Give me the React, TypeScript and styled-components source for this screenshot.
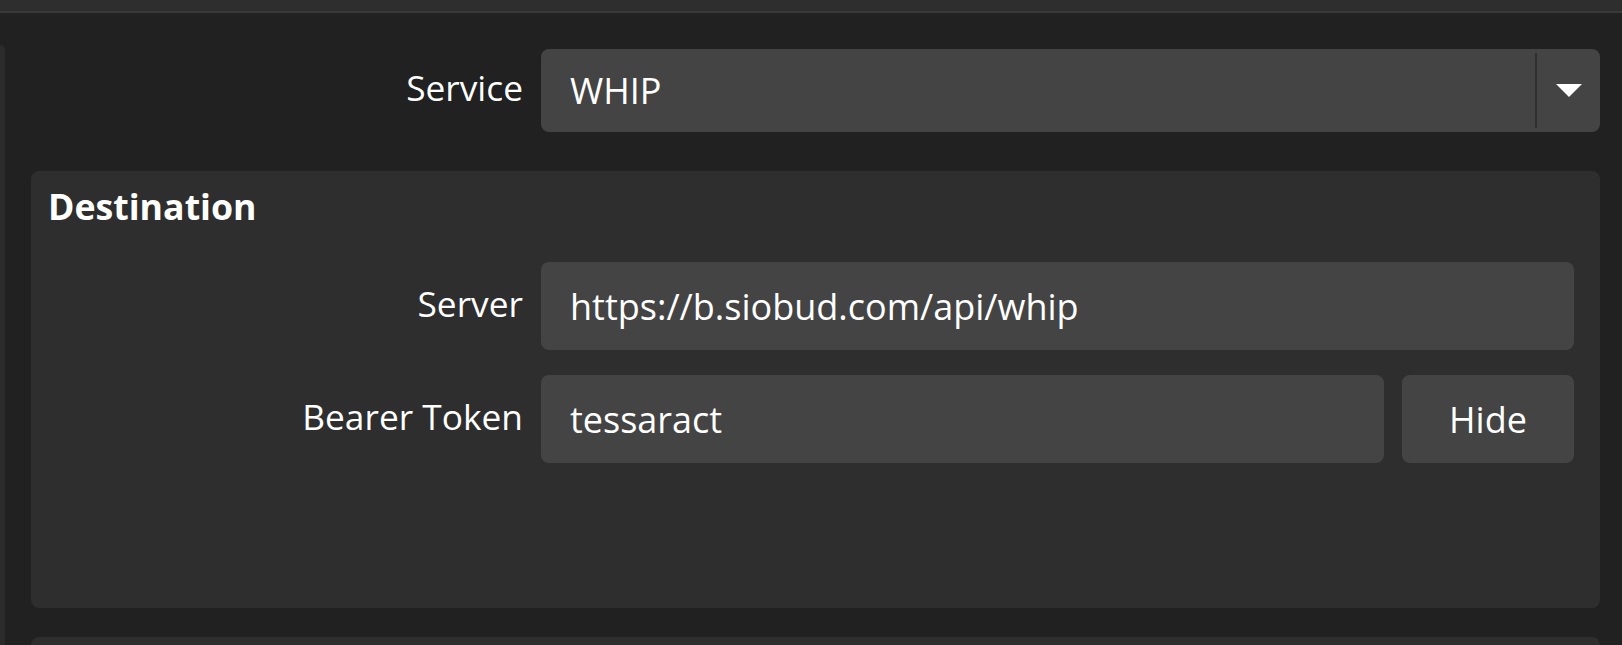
import React from "react";
import styled, { createGlobalStyle } from "styled-components";

const GlobalStyle = createGlobalStyle`
  html, body {
    margin: 0;
    padding: 0;
    background: #212121;
    overflow: hidden;
  }
  body {
    font-family: "Open Sans", "Noto Sans", sans-serif;
    color: #ffffff;
  }
  * { box-sizing: border-box; }
`;

const Window = styled.div`
  height: 645px;
  display: flex;
  flex-direction: column;
  background: #212121;
`;

const TitleBar = styled.div`
  height: 13px;
  flex-shrink: 0;
  background: #2e2e2e;
  border-bottom: 2px solid #393939;
`;

const Body = styled.div`
  flex: 1;
  display: flex;
  min-height: 0;
  overflow: hidden;
`;

const SidePanel = styled.div`
  width: 5px;
  flex-shrink: 0;
  margin-top: 32px;
  background: #2b2b2b;
  border-top-right-radius: 5px;
`;

const Content = styled.div`
  flex: 1;
  display: flex;
  flex-direction: column;
  padding: 36px 22px 0 26px;
  min-width: 0;
`;

const FormRow = styled.div<{ $label: number; $h: number }>`
  display: grid;
  grid-template-columns: ${(p) => p.$label}px 1fr;
  column-gap: 18px;
  height: ${(p) => p.$h}px;
  flex-shrink: 0;
`;

const Label = styled.div`
  align-self: center;
  text-align: right;
  font-size: 35.3px;
  line-height: 49px;
  padding-bottom: 6px;
  white-space: nowrap;
  color: #ffffff;
`;

const Combo = styled.div`
  display: flex;
  align-items: stretch;
  background: #444444;
  border-radius: 8px;
  overflow: hidden;
`;

const ComboText = styled.div`
  flex: 1;
  display: flex;
  align-items: center;
  padding-left: 29px;
  font-size: 36px;
  line-height: 49px;
`;

const ComboArrow = styled.div`
  width: 65px;
  margin: 4px 0;
  border-left: 2px solid #2f2f2f;
  display: flex;
  align-items: center;
  justify-content: center;
  padding-left: 1px;
`;

const Group = styled.div<{ $last?: boolean }>`
  background: #2e2e2e;
  border-radius: ${(p) => (p.$last ? "8px 8px 0 0" : "8px")};
  flex-shrink: 0;
  ${(p) =>
    p.$last
      ? "flex: 1; margin-top: 29px;"
      : "height: 437px; margin-top: 39px; padding: 11px 26px 0 17px;"}
`;

const GroupTitle = styled.div`
  font-size: 35.7px;
  line-height: 49px;
  font-weight: 700;
  margin-bottom: 31px;
`;

const Fields = styled.div`
  display: flex;
  flex-direction: column;
  gap: 25px;
`;

const Field = styled.div`
  display: flex;
  align-items: center;
  background: #444444;
  border-radius: 8px;
  padding-left: 29px;
  font-size: 36px;
  line-height: 49px;
  white-space: nowrap;
  overflow: hidden;
`;

const FieldWithButton = styled.div`
  display: grid;
  grid-template-columns: 1fr 172px;
  column-gap: 18px;
`;

const Button = styled.div`
  display: flex;
  align-items: center;
  justify-content: center;
  background: #444444;
  border-radius: 8px;
  font-size: 36px;
  line-height: 49px;
`;

const Arrow = () => (
  <svg width="26" height="13" viewBox="0 0 26 13">
    <polygon points="0,0 26,0 13,13" fill="#ffffff" />
  </svg>
);

export default function App() {
  return (
    <>
      <GlobalStyle />
      <Window>
        <TitleBar />
        <Body>
          <SidePanel />
          <Content>
            <FormRow $label={492} $h={83}>
              <Label>Service</Label>
              <Combo>
                <ComboText>WHIP</ComboText>
                <ComboArrow>
                  <Arrow />
                </ComboArrow>
              </Combo>
            </FormRow>
            <Group>
              <GroupTitle>Destination</GroupTitle>
              <Fields>
                <FormRow $label={475} $h={88}>
                  <Label>Server</Label>
                  <Field>https://b.siobud.com/api/whip</Field>
                </FormRow>
                <FormRow $label={475} $h={88}>
                  <Label>Bearer Token</Label>
                  <FieldWithButton>
                    <Field>tessaract</Field>
                    <Button>Hide</Button>
                  </FieldWithButton>
                </FormRow>
              </Fields>
            </Group>
            <Group $last />
          </Content>
        </Body>
      </Window>
    </>
  );
}
